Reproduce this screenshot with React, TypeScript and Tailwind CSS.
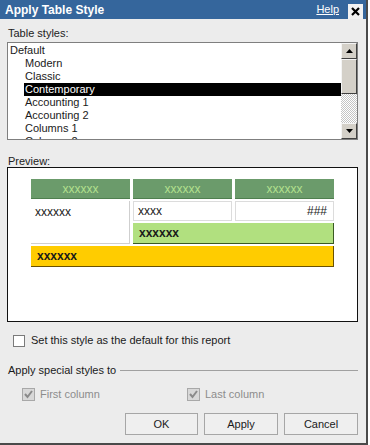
import React from "react";

const Arrow = ({ up }: { up?: boolean }) => (
  <svg width="7" height="4" viewBox="0 0 7 4">
    {up ? <polygon points="3.5,0 7,4 0,4" fill="#000" /> : <polygon points="0,0 7,0 3.5,4" fill="#000" />}
  </svg>
);

const ScrollBtn = ({ children, h }: { children?: React.ReactNode; h: string }) => (
  <div className={`${h} w-full bg-[#d4d0c8] border-t border-l border-t-[#f4f4f4] border-l-[#f4f4f4] border-b border-r border-b-[#404040] border-r-[#404040] flex items-center justify-center`}>
    {children}
  </div>
);

const DisabledCheck = () => (
  <div className="w-[13px] h-[13px] bg-[#d8d8d8] border border-[#a8a8a8] flex items-center justify-center">
    <svg width="9" height="9" viewBox="0 0 9 9">
      <polyline points="1,4 3.5,7 8,1" fill="none" stroke="#8a8a8a" strokeWidth="2" />
    </svg>
  </div>
);

export default function App() {
  const items = ["Modern", "Classic", "Contemporary", "Accounting 1", "Accounting 2", "Columns 1", "Columns 2"];
  return (
    <div className="w-[370px] h-[445px] bg-white text-[11px] text-[#1a1a1a]" style={{ fontFamily: '"Liberation Sans", Arial, sans-serif' }}>
      <div className="w-[368px] h-[445px] bg-[#ececec] border-r-2 border-b-2 border-[#4a4a4a] flex flex-col">
        {/* Title bar */}
        <div className="h-[19px] bg-[#35669c] flex items-center pl-[5px] pr-[3px] shrink-0">
          <span className="text-white font-bold text-[12px] leading-none">Apply Table Style</span>
          <span className="ml-auto text-white underline text-[11px] leading-none mr-[9px]">Help</span>
          <div className="w-[15px] h-[15px] bg-[#f2f2f2] flex items-center justify-center self-end">
            <svg width="9" height="9" viewBox="0 0 9 9">
              <path d="M1 1 L8 8 M8 1 L1 8" stroke="#000" strokeWidth="2.2" />
            </svg>
          </div>
        </div>

        <div className="flex flex-col pl-[7px] pr-[8px]">
          <div className="mt-[7px] h-[14px] leading-[14px] pl-[1px] text-[#222]">Table styles:</div>

          {/* Listbox */}
          <div className="mt-[2px] h-[98px] border border-[#7f7f7f] bg-white flex">
            <div className="flex-1 overflow-hidden pt-[1px]">
              <div className="h-[13px] leading-[13px] pl-[2px]">Default</div>
              {items.map((it) => (
                <div
                  key={it}
                  className={`h-[13px] leading-[13px] ml-[16px] pl-[1px] ${it === "Contemporary" ? "bg-black text-white" : ""}`}
                >
                  {it}
                </div>
              ))}
            </div>
            <div className="w-[16px] flex flex-col">
              <ScrollBtn h="h-[16px]">
                <Arrow up />
              </ScrollBtn>
              <ScrollBtn h="h-[35px]" />
              <div className="flex-1 bg-[repeating-conic-gradient(#c4c4c4_0_25%,#ffffff_0_50%)] [background-size:2px_2px]" />
              <ScrollBtn h="h-[16px]">
                <Arrow />
              </ScrollBtn>
            </div>
          </div>

          <div className="mt-[15px] h-[12px] leading-[12px] pl-[1px] text-[#222]">Preview:</div>

          {/* Preview */}
          <div className="h-[155px] border border-[#111] bg-white pl-[23px] pt-[11px]">
            <div className="grid grid-cols-[99px_99px_99px] gap-x-[3px] grid-rows-[20px_20px_21px_21px] gap-y-[2px] text-[12px]">
              {[0, 1, 2].map((i) => (
                <div key={i} className="bg-[#6b9b6b] border-b border-[#4f7f4f] flex items-center justify-center text-[#b2e08e]">
                  xxxxxx
                </div>
              ))}
              <div className="row-span-2 border-r border-b border-[#cfcfcf] pl-[4px] pt-[4px] leading-[14px] text-[#222]">xxxxxx</div>
              <div className="border border-[#dcdcdc] pl-[4px] flex items-center text-[#222]">xxxx</div>
              <div className="border border-[#dcdcdc] pr-[6px] flex items-center justify-end text-[#222]">###</div>
              <div className="col-span-2 bg-[#b1e07f] border-r border-b border-[#3a5a24] pl-[6px] flex items-center font-bold">xxxxxx</div>
              <div className="col-span-3 bg-[#ffcc00] border-r border-b border-[#6b5200] pl-[6px] flex items-center font-bold">xxxxxx</div>
            </div>
          </div>

          {/* Default checkbox */}
          <div className="mt-[12px] h-[13px] flex items-center">
            <div className="ml-[6px] w-[12px] h-[12px] bg-white border border-[#7a7a7a]" />
            <span className="ml-[6px] leading-none">Set this style as the default for this report</span>
          </div>

          {/* Apply special styles */}
          <div className="mt-[16px] h-[14px] flex items-center">
            <span className="pl-[1px] leading-none">Apply special styles to</span>
            <div className="ml-[4px] flex-1 h-px bg-[#a0a0a0]" />
          </div>

          <div className="mt-[11px] h-[13px] flex items-center">
            <div className="ml-[15px]">
              <DisabledCheck />
            </div>
            <span className="ml-[5px] leading-none text-[#8c8c8c] w-[147px]">First column</span>
            <DisabledCheck />
            <span className="ml-[5px] leading-none text-[#8c8c8c]">Last column</span>
          </div>

          {/* Buttons */}
          <div className="mt-[12px] flex justify-end gap-[6px]">
            <button className="w-[73px] h-[22px] border border-[#a6a6a6] bg-[#efefef] text-[11px]">OK</button>
            <button className="w-[74px] h-[22px] border border-[#a6a6a6] bg-[#efefef] text-[11px]">Apply</button>
            <button className="w-[74px] h-[22px] border border-[#a6a6a6] bg-[#efefef] text-[11px]">Cancel</button>
          </div>
        </div>
      </div>
    </div>
  );
}
